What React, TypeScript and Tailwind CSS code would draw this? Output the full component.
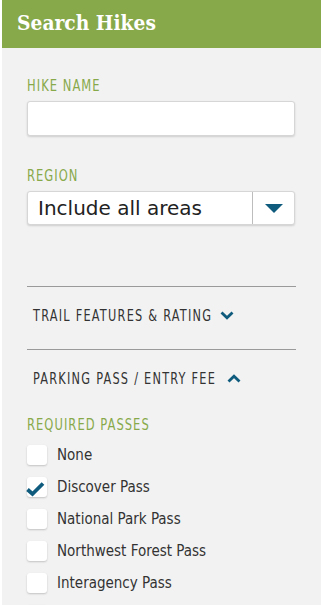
import { useState } from "react";

const condensed = { fontFamily: '"DejaVu Sans Condensed", "Liberation Sans", sans-serif' };

const passes = ["None", "Discover Pass", "National Park Pass", "Northwest Forest Pass", "Interagency Pass"];

function Chevron({ up }: { up?: boolean }) {
  return (
    <svg width="14" height="9" viewBox="0 0 14 9">
      <path d={up ? "M1.5 7.5 L7 2.2 L12.5 7.5" : "M1.5 1.5 L7 6.8 L12.5 1.5"} fill="none" stroke="#0f5b7d" strokeWidth="2.8" />
    </svg>
  );
}

function Label({ text, className = "" }: { text: string; className?: string }) {
  return (
    <div className={"h-[16px] flex items-start " + className}>
      <span className="inline-block origin-left scale-x-[0.8] whitespace-nowrap text-[16px] leading-[15px] text-[#88a94a] tracking-[1.3px]" style={condensed}>
        {text}
      </span>
    </div>
  );
}

function Section({ text, w, up }: { text: string; w: string; up?: boolean }) {
  return (
    <div className="border-t border-[#9a9a9a] h-[63px] flex items-start pt-[21px] pl-[6px]">
      <span className={"inline-block origin-left scale-x-[0.785] whitespace-nowrap text-[16px] leading-[16px] text-[#333] tracking-[1.6px] " + w} style={condensed}>
        {text}
      </span>
      <span className="mt-[3px]"><Chevron up={up} /></span>
    </div>
  );
}

export default function App() {
  const [checked, setChecked] = useState<string[]>(["Discover Pass"]);

  function toggle(p: string) {
    setChecked(checked.includes(p) ? checked.filter((x) => x !== p) : [...checked, p]);
  }

  return (
    <div className="w-[321px] h-[605px] overflow-hidden bg-white pl-[2px]">
      <div className="h-full bg-[#f2f2f2]">
        <div className="h-[48px] bg-[#88a94a] pl-[15px] pt-[10px]">
          <h1 className="inline-block origin-left scale-x-[0.89] whitespace-nowrap text-[21px] leading-[26px] font-bold text-white" style={{ fontFamily: '"DejaVu Serif", "Liberation Serif", serif' }}>
            Search Hikes
          </h1>
        </div>

        <div className="px-[25px] pt-[30px]">
          <Label text="HIKE NAME" />
          <input className="mt-[7px] w-[268px] h-[35px] bg-white rounded-[3px] border border-[#d6d6d6] shadow-[0_1px_2px_rgba(0,0,0,0.15)] outline-none" />

          <Label text="REGION" className="mt-[32px]" />
          <div className="mt-[7px] w-[268px] h-[34px] bg-white rounded-[3px] border border-[#d6d6d6] shadow-[0_1px_2px_rgba(0,0,0,0.15)] flex items-center">
            <span className="flex-1 pl-[10px] text-[20px] text-[#222]" style={{ fontFamily: '"DejaVu Sans", sans-serif' }}>Include all areas</span>
            <div className="w-[42px] h-full border-l border-[#bdbdbd] flex items-center justify-center">
              <svg width="18" height="9" viewBox="0 0 18 9"><path d="M0 0 H18 L9 9 Z" fill="#0f5b7d" /></svg>
            </div>
          </div>

          <div className="mt-[61px]">
            <Section text="TRAIL FEATURES & RATING" w="w-[187px]" />
            <Section text="PARKING PASS / ENTRY FEE" w="w-[194px]" up />
          </div>

          <Label text="REQUIRED PASSES" className="mt-[5px]" />
          <div className="mt-[12px] flex flex-col gap-[12px]">
            {passes.map((p) => (
              <label key={p} className="flex items-center gap-[10px] h-[20px] cursor-pointer" onClick={() => toggle(p)}>
                <span className="w-[20px] h-[20px] bg-white rounded-[3px] shadow-[0_1px_2px_rgba(0,0,0,0.2)] flex items-center justify-center">
                  {checked.includes(p) && (
                    <svg width="20" height="16" viewBox="0 0 20 16" className="mt-[3px] -ml-[2px]">
                      <path d="M1.5 8.5 L6.5 13 L17 2.5" fill="none" stroke="#0f5b7d" strokeWidth="3.8" />
                    </svg>
                  )}
                </span>
                <span className="text-[15px] text-[#333]" style={{ fontFamily: '"DejaVu Sans Condensed", "DejaVu Sans", sans-serif' }}>{p}</span>
              </label>
            ))}
            <span className="w-[20px] h-[20px] bg-white rounded-[3px] shadow-[0_1px_2px_rgba(0,0,0,0.2)]" />
          </div>
        </div>
      </div>
    </div>
  );
}
